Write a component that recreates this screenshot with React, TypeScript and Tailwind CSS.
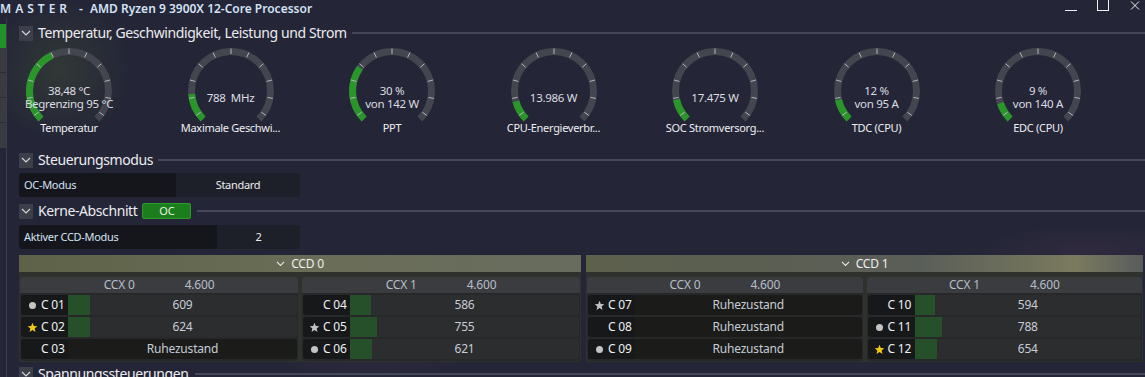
import React from "react";

const FONT = { fontFamily: '"Noto Sans", "DejaVu Sans", sans-serif' };

function pt(cx: number, cy: number, r: number, a: number) {
  const rad = (a * Math.PI) / 180;
  return [cx + r * Math.sin(rad), cy - r * Math.cos(rad)];
}
function arcPath(cx: number, cy: number, r: number, a0: number, a1: number) {
  const [x0, y0] = pt(cx, cy, r, a0);
  const [x1, y1] = pt(cx, cy, r, a1);
  const large = a1 - a0 > 180 ? 1 : 0;
  return `M ${x0} ${y0} A ${r} ${r} 0 ${large} 1 ${x1} ${y1}`;
}

function Gauge({ frac, lines, label }: { frac: number; lines: string[]; label: string }) {
  const cx = 50;
  const cy = 45;
  const r = 39.5;
  const start = -135;
  const end = 135;
  const gEnd = start + (end - start) * frac;
  const ticks: number[] = [];
  for (let a = -125; a <= 125.1; a += 25) ticks.push(a);
  return (
    <div className="flex w-[100px] shrink-0 flex-col items-center">
      <div className="relative h-[74px] w-[100px]">
        <svg width="100" height="76" className="absolute left-0 top-0">
          <path d={arcPath(cx, cy, r, start, end)} stroke="#44464f" strokeWidth="7" fill="none" />
          <path d={arcPath(cx, cy, r, start, gEnd)} stroke="#2a962a" strokeWidth="7" fill="none" />
          {ticks.map((a) => {
            const [x0, y0] = pt(cx, cy, r - 2.5, a);
            const [x1, y1] = pt(cx, cy, r + 3, a);
            return <line key={a} x1={x0} y1={y0} x2={x1} y2={y1} stroke="#b4b6bc" strokeWidth="1" />;
          })}
        </svg>
        <div className="absolute left-0 right-0 top-[51px] flex -translate-y-1/2 flex-col items-center text-[11.5px] leading-[13px] tracking-[-0.3px] text-[#dcdde2]">
          {lines.map((l, i) => (
            <div key={i} className="whitespace-pre">{l}</div>
          ))}
        </div>
      </div>
      <div className="h-[16px] whitespace-nowrap text-[11px] leading-[16px] tracking-[-0.3px] text-[#eeeef2]">{label}</div>
    </div>
  );
}

function Chevron({ size = 10, color = "#d4d4d8" }: { size?: number; color?: string }) {
  return (
    <svg width={size} height={size * 0.6} viewBox="0 0 10 6">
      <path d="M1 1 L5 5 L9 1" stroke={color} strokeWidth="1.2" fill="none" />
    </svg>
  );
}

function SectionHeader({ title, children, lineGap = 5 }: { title: string; children?: React.ReactNode; lineGap?: number }) {
  return (
    <div className="flex h-[16px] items-center">
      <div className="flex h-[15px] w-[14px] items-center justify-center bg-[#3c3e4a]">
        <Chevron />
      </div>
      <div className="ml-[5px] whitespace-nowrap text-[14px] leading-[16px] tracking-[-0.4px] text-[#ececf0]">{title}</div>
      {children}
      <div className="h-[2px] flex-1 bg-[#44475a]" style={{ marginLeft: lineGap }} />
    </div>
  );
}

function KVRow({ k, v, split }: { k: string; v: string; split: number }) {
  return (
    <div className="flex h-[24px] w-[281px] overflow-hidden rounded-[3px] text-[11px] tracking-[-0.3px]">
      <div className="flex items-center bg-[#15161c] pl-[5px] text-[#d2e2f4]" style={{ width: split }}>
        {k}
      </div>
      <div className="flex flex-1 items-center justify-center bg-[#1e2029] text-[#ececec]">{v}</div>
    </div>
  );
}

type Core = { name: string; icon: "dot" | "ystar" | "gstar" | "none"; val?: number; frac?: number };

function Star({ color }: { color: string }) {
  return (
    <svg width="11" height="11" viewBox="0 0 24 24">
      <path d="M12 1.5 L14.9 8.6 L22.5 9.2 L16.7 14.1 L18.5 21.6 L12 17.6 L5.5 21.6 L7.3 14.1 L1.5 9.2 L9.1 8.6 Z" fill={color} />
    </svg>
  );
}

function CoreRow({ c }: { c: Core }) {
  const idle = c.val === undefined;
  return (
    <div className={`flex h-[20px] overflow-hidden rounded-[3px] text-[11px] tracking-[-0.2px] ${idle ? "bg-[#1b1c1a]" : "bg-[#2c2d2e]"}`}>
      <div className="flex w-[47px] shrink-0 items-center bg-[#17181a]">
        <div className="flex w-[20px] items-center justify-end pr-[3px]">
          {c.icon === "dot" && <div className="mr-[2px] h-[7px] w-[7px] rounded-full bg-[#c4c4c4]" />}
          {c.icon === "ystar" && <Star color="#f2c811" />}
          {c.icon === "gstar" && <Star color="#c2c2c4" />}
        </div>
        <div className="whitespace-nowrap text-[12px] text-[#eef0f4]">{c.name}</div>
      </div>
      <div className={`relative flex flex-1 items-center justify-center ${idle ? "bg-[#1b1c1a]" : ""}`}>
        {!idle && (
          <div className="absolute bottom-0 left-0 top-0 bg-[#25502a]" style={{ width: `${(c.frac ?? 0) * 100}%` }} />
        )}
        <span className="relative text-[12px] text-[#c6ccd6]">{idle ? "Ruhezustand" : c.val}</span>
      </div>
    </div>
  );
}

function CCX({ name, cores }: { name: string; cores: Core[] }) {
  return (
    <div className="flex w-[279px] flex-col rounded-[3px] bg-[#26282a] pb-[2px]">
      <div className="flex h-[16px] items-center justify-center gap-[50px] rounded-t-[3px] bg-[#3a3c3f] text-[12px] tracking-[-0.2px] text-[#b6bec8]">
        <span>{name}</span>
        <span>4.600</span>
      </div>
      <div className="mt-[2px] flex flex-col gap-[2px] px-[1px]">
        {cores.map((c) => (
          <CoreRow key={c.name} c={c} />
        ))}
      </div>
    </div>
  );
}

function CCD({ name, a, b, headerClass }: { name: string; a: Core[]; b: Core[]; headerClass: string }) {
  return (
    <div className="flex h-[107px] flex-col rounded-[2px] bg-[#2f322c]">
      <div className={`flex h-[17px] items-center justify-center gap-[6px] text-[12px] tracking-[-0.2px] text-[#f0f0f0] ${headerClass}`}>
        <Chevron size={9} color="#e8e8e8" />
        <span>{name}</span>
      </div>
      <div className="mt-[5px] flex gap-[4px] px-[1px]">
        <CCX name="CCX 0" cores={a} />
        <CCX name="CCX 1" cores={b} />
      </div>
    </div>
  );
}

export default function App() {
  const gauges = [
    { frac: 0.405, lines: ["38,48 °C", "Begrenzing 95 °C"], label: "Temperatur" },
    { frac: 0.15, lines: ["788  MHz"], label: "Maximale Geschwi..." },
    { frac: 0.3, lines: ["30 %", "von 142 W"], label: "PPT" },
    { frac: 0.11, lines: ["13.986 W"], label: "CPU-Energieverbr..." },
    { frac: 0.12, lines: ["17.475 W"], label: "SOC Stromversorg..." },
    { frac: 0.12, lines: ["12 %", "von 95 A"], label: "TDC (CPU)" },
    { frac: 0.1, lines: ["9 %", "von 140 A"], label: "EDC (CPU)" },
  ];

  const ccd0a: Core[] = [
    { name: "C 01", icon: "dot", val: 609, frac: 0.096 },
    { name: "C 02", icon: "ystar", val: 624, frac: 0.096 },
    { name: "C 03", icon: "none" },
  ];
  const ccd0b: Core[] = [
    { name: "C 04", icon: "none", val: 586, frac: 0.092 },
    { name: "C 05", icon: "gstar", val: 755, frac: 0.118 },
    { name: "C 06", icon: "dot", val: 621, frac: 0.096 },
  ];
  const ccd1a: Core[] = [
    { name: "C 07", icon: "gstar" },
    { name: "C 08", icon: "none" },
    { name: "C 09", icon: "dot" },
  ];
  const ccd1b: Core[] = [
    { name: "C 10", icon: "none", val: 594, frac: 0.092 },
    { name: "C 11", icon: "dot", val: 788, frac: 0.123 },
    { name: "C 12", icon: "ystar", val: 654, frac: 0.1 },
  ];

  return (
    <div
      className="relative flex h-[377px] w-[1145px] flex-col overflow-hidden bg-[#242637]"
      style={{
        ...FONT,
        backgroundImage:
          "radial-gradient(circle at 60px 70px, rgba(90,110,50,0.25), transparent 70px), radial-gradient(ellipse at 370px 330px, rgba(120,60,110,0.22), transparent 120px), radial-gradient(ellipse at 1090px 250px, rgba(120,60,110,0.15), transparent 110px)",
      }}
    >
      {/* title bar */}
      <div className="relative flex h-[18px] shrink-0 items-center">
        <div className="flex items-center whitespace-nowrap text-[12px] font-semibold leading-[14px] text-[#d4e2f6]">
          <span className="tracking-[4px]">MASTER</span>
          <span className="ml-[8px]">-</span>
          <span className="ml-[7px]">AMD Ryzen 9 3900X 12-Core Processor</span>
        </div>
        <div className="absolute right-0 top-0 flex h-[14px] items-start">
          <div className="mr-[20px] mt-[10px] h-[1px] w-[12px] bg-[#f0f0f0]" />
          <div className="mr-[21px] -mt-[1px] h-[12px] w-[12px] border border-[#f0f0f0]" />
          <svg width="10" height="9" className="mr-[5px] mt-[1px]" viewBox="0 0 10 9">
            <path d="M1 0.5 L9 8.5 M9 0.5 L1 8.5" stroke="#f0f0f0" strokeWidth="1" />
          </svg>
        </div>
      </div>

      <div className="flex flex-1">
        {/* sidebar */}
        <div className="flex w-[7px] shrink-0 flex-col border-r border-[#3b3d4a]">
          <div className="mt-[6px] h-[24px] bg-[#23912a]" />
          <div className="h-[25px] border-b border-[#2a2b33] bg-[#3a3b40]" />
          <div className="h-[25px] border-b border-[#2a2b33] bg-[#3a3b40]" />
          <div className="h-[25px] border-b border-[#2a2b33] bg-[#3a3b40]" />
          <div className="h-[25px] bg-[#3a3b40]" />
        </div>

        {/* content */}
        <div className="flex flex-1 flex-col pl-[12px] pt-[7px]">
          <SectionHeader title="Temperatur, Geschwindigkeit, Leistung und Strom" lineGap={5} />
          <div className="mt-[5px] flex gap-[61.5px] pl-[0px]">
            {gauges.map((g) => (
              <Gauge key={g.label} {...g} />
            ))}
          </div>

          <div className="mt-[16px]">
            <SectionHeader title="Steuerungsmodus" lineGap={5} />
          </div>
          <div className="mt-[5px]">
            <KVRow k="OC-Modus" v="Standard" split={157} />
          </div>

          <div className="mt-[6px]">
            <SectionHeader title="Kerne-Abschnitt" lineGap={6}>
              <div className="ml-[5px] flex h-[16px] w-[49px] items-center justify-center rounded-[2px] border border-[#2b9a2b] bg-[#1c7d1c] text-[11px] text-[#e6f2e6]">
                OC
              </div>
            </SectionHeader>
          </div>
          <div className="mt-[6px]">
            <KVRow k="Aktiver CCD-Modus" v="2" split={198} />
          </div>

          <div className="mt-[6px] grid grid-cols-[562px_557px] gap-[5px]">
            <CCD
              name="CCD 0"
              a={ccd0a}
              b={ccd0b}
              headerClass="bg-[linear-gradient(90deg,#5e6248_0%,#6a6e58_55%,#676c5e_100%)]"
            />
            <CCD
              name="CCD 1"
              a={ccd1a}
              b={ccd1b}
              headerClass="bg-[linear-gradient(90deg,#5c604c_0%,#5a5e58_60%,#7a7a5e_88%,#585c5c_100%)]"
            />
          </div>

          <div className="mt-[4px]">
            <SectionHeader title="Spannungssteuerungen" lineGap={6} />
          </div>
        </div>
      </div>
    </div>
  );
}
